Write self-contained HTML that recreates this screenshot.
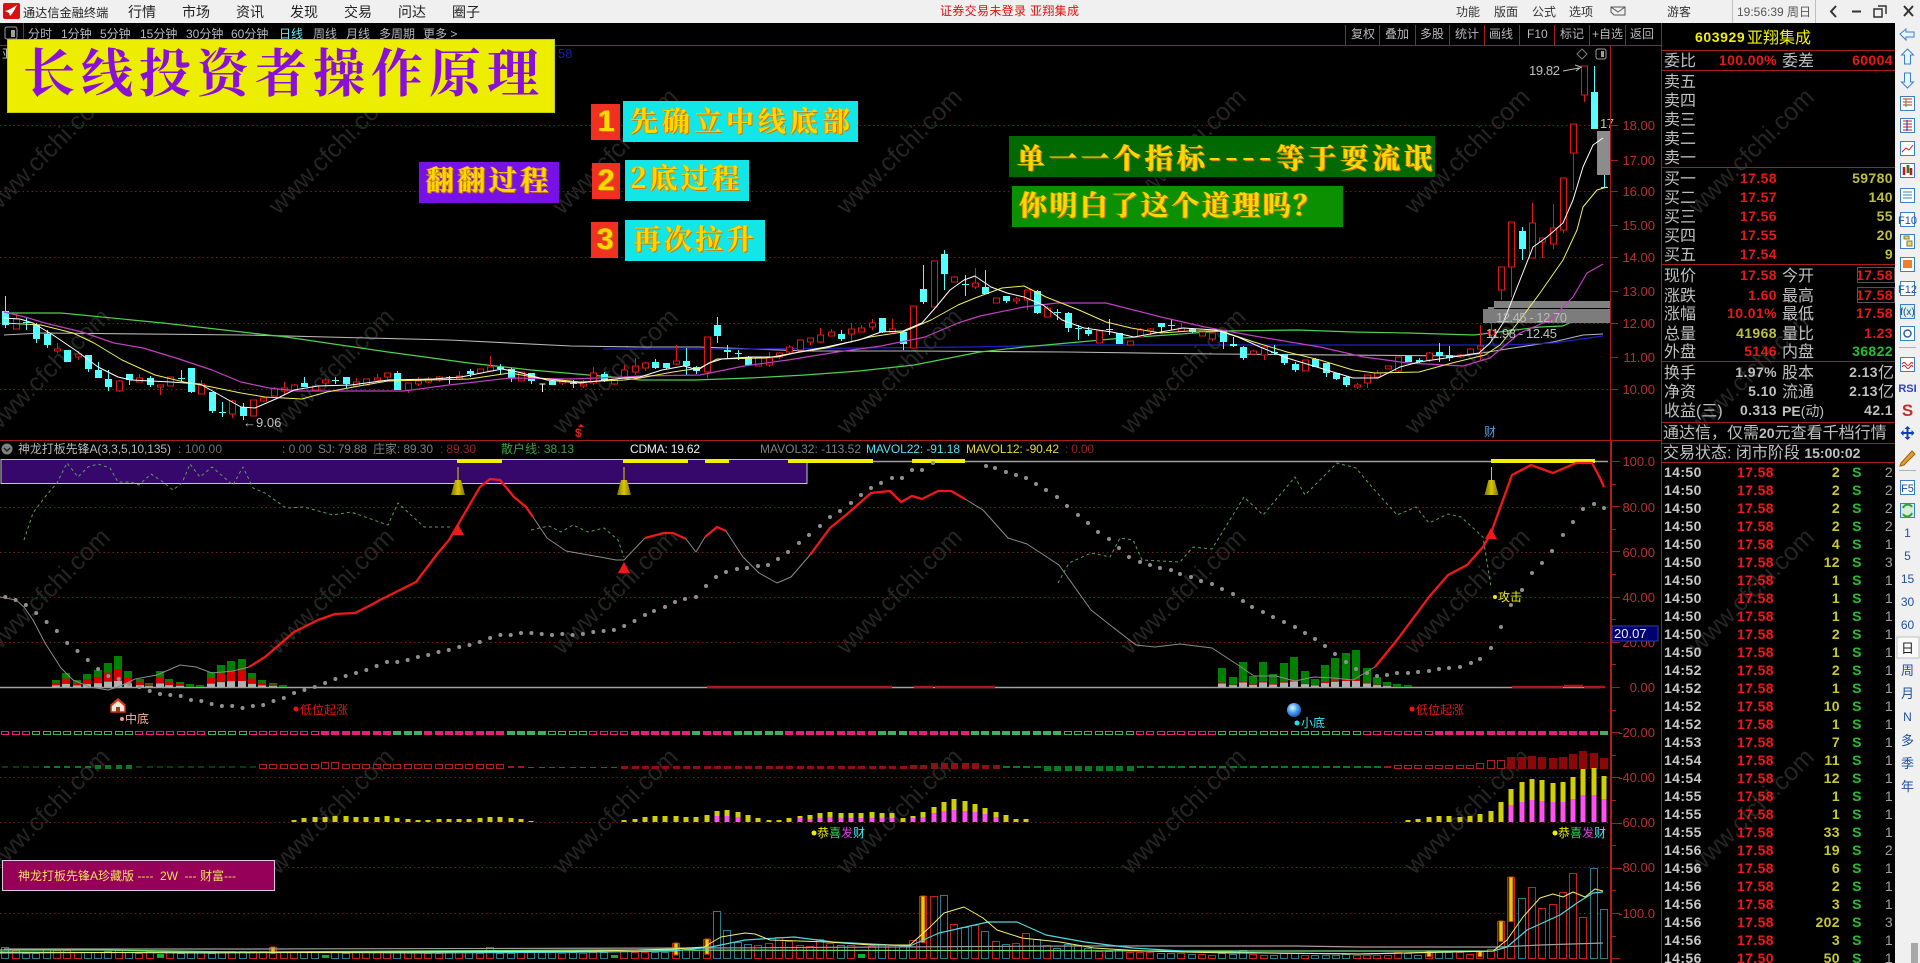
<!DOCTYPE html>
<html lang="zh">
<head>
<meta charset="utf-8">
<title>通达信金融终端</title>
<style>
html,body{margin:0;padding:0;background:#000;width:1920px;height:963px;overflow:hidden}
body{position:relative;font-family:"Liberation Sans","Noto Sans CJK SC",sans-serif}
svg{position:absolute;left:0;top:0;font-family:"Liberation Sans","Noto Sans CJK SC",sans-serif}
.b{position:absolute;box-sizing:border-box}
.g{position:absolute;white-space:pre;font-family:"Noto Serif CJK SC","Noto Sans CJK SC",serif;font-weight:700;color:#ffd800;text-shadow:1px 1px 0 #d07a00,-1px 0 0 #e0a000}
#t{position:absolute;left:1664px;top:463px;border-collapse:collapse;table-layout:fixed;width:229px;font:bold 14px "Liberation Sans",sans-serif;letter-spacing:.4px}
#t td{height:18px;padding:0;line-height:18px;text-align:right;overflow:hidden;white-space:nowrap}
#t td:nth-child(1){text-align:left;color:#c8c8c8}
#t td:nth-child(2){color:#f01818}
#t td:nth-child(3){color:#c8c830}
#t td:nth-child(4){text-align:center;color:#20c030}
#t td:nth-child(5){color:#a0a0a0;font-weight:400}
</style>
</head>
<body>
<svg id="s" width="1920" height="963" viewBox="0 0 1920 963" xmlns="http://www.w3.org/2000/svg">
<defs>
<radialGradient id="sph" cx=".4" cy=".35" r=".7"><stop offset="0" stop-color="#e8f6ff"/><stop offset=".5" stop-color="#4aa0f0"/><stop offset="1" stop-color="#1050b0"/></radialGradient>
<linearGradient id="gold" x1="0" x2="1" y1="0" y2="0"><stop offset="0" stop-color="#807000"/><stop offset=".5" stop-color="#d8c800"/><stop offset="1" stop-color="#807000"/></linearGradient>
</defs>
<!-- watermark -->
<g fill="#252525" font-size="25" text-anchor="middle">
<text transform="translate(53,157) rotate(-45)">www.cfchi.com</text><text transform="translate(337,157) rotate(-45)">www.cfchi.com</text><text transform="translate(621,157) rotate(-45)">www.cfchi.com</text><text transform="translate(905,157) rotate(-45)">www.cfchi.com</text><text transform="translate(1189,157) rotate(-45)">www.cfchi.com</text><text transform="translate(1473,157) rotate(-45)">www.cfchi.com</text><text transform="translate(1757,157) rotate(-45)">www.cfchi.com</text>
<text transform="translate(53,377) rotate(-45)">www.cfchi.com</text><text transform="translate(337,377) rotate(-45)">www.cfchi.com</text><text transform="translate(621,377) rotate(-45)">www.cfchi.com</text><text transform="translate(905,377) rotate(-45)">www.cfchi.com</text><text transform="translate(1189,377) rotate(-45)">www.cfchi.com</text><text transform="translate(1473,377) rotate(-45)">www.cfchi.com</text><text transform="translate(1757,377) rotate(-45)">www.cfchi.com</text>
<text transform="translate(53,597) rotate(-45)">www.cfchi.com</text><text transform="translate(337,597) rotate(-45)">www.cfchi.com</text><text transform="translate(621,597) rotate(-45)">www.cfchi.com</text><text transform="translate(905,597) rotate(-45)">www.cfchi.com</text><text transform="translate(1189,597) rotate(-45)">www.cfchi.com</text><text transform="translate(1473,597) rotate(-45)">www.cfchi.com</text><text transform="translate(1757,597) rotate(-45)">www.cfchi.com</text>
<text transform="translate(53,817) rotate(-45)">www.cfchi.com</text><text transform="translate(337,817) rotate(-45)">www.cfchi.com</text><text transform="translate(621,817) rotate(-45)">www.cfchi.com</text><text transform="translate(905,817) rotate(-45)">www.cfchi.com</text><text transform="translate(1189,817) rotate(-45)">www.cfchi.com</text><text transform="translate(1473,817) rotate(-45)">www.cfchi.com</text><text transform="translate(1757,817) rotate(-45)">www.cfchi.com</text>
</g>
<!-- grid -->
<path d="M0 125.5H1610M0 191.5H1610M0 257.5H1610M0 323.5H1610M0 389.5H1610M0 507.5H1610M0 552.5H1610M0 597.5H1610M0 642.5H1610M0 777.5H1610M0 822.5H1610M0 867.5H1610M0 913.5H1610" stroke="#7a1c1c" stroke-dasharray="1.5 3" fill="none"/>
<text x="2" y="58" fill="#c0c0c0" font-size="12">亚</text>
<!-- chart drawn by script goes here -->
<g id="c"></g>

<!-- upper chart annotations -->
<rect x="1494" y="301" width="116" height="7" fill="#808080"/>
<rect x="1483" y="309" width="127" height="14" fill="#7c7c7c"/>
<rect x="1597" y="131" width="13" height="44" fill="#8c8c8c"/>
<g id="c2"></g>
<g fill="#c0c0c0" font-size="13">
<text x="1496" y="322" fill="#b8b8b8" textLength="71">12.45 - 12.70</text>
<text x="1486" y="338" fill="#c0c0c0" textLength="71">11.98 - 12.45</text>
<text x="1529" y="75" textLength="31">19.82</text>
<text x="1600" y="128" textLength="14">17</text>
<text x="243" y="427">←9.06</text>
</g>
<path d="M1563 71l16-3m-4-3l6 2-5 4" stroke="#c0c0c0" fill="none"/>
<path d="M1582 49l5 5-5 5-5-5z" stroke="#808080" fill="none"/>
<rect x="1596" y="49" width="10" height="10" rx="2" fill="#000" stroke="#a0a0a0"/><rect x="1601" y="51" width="3" height="6" fill="#a0a0a0"/>
<text x="575" y="437" fill="#e02020" font-size="12" font-weight="700">$</text>
<path d="M581 424l3 3h-6z" fill="#e02020"/>
<text x="1484" y="436" fill="#4aa0e0" font-size="12">财</text>
<text x="558" y="58" fill="#1020a8" font-size="13">58</text>

<!-- panel frame -->
<path d="M0 440.5H1661M0 45.5H1661M23.5 23V45M1661.5 23V963M1610.5 45V440" stroke="#a81c1c" fill="none"/>
<path d="M1611 440V963" stroke="#b01c1c" stroke-width="2"/>
<path d="M1345.5 25V45M1379.5 25V45M1415.5 25V45M1449.5 25V45M1484.5 25V45M1519.5 25V45M1554.5 25V45M1589.5 25V45M1625.5 25V45" stroke="#a81c1c"/>
<g id="tk" stroke="#a02020"></g>
<!-- axis labels -->
<g fill="#b83030" font-size="13" text-anchor="end">
<text x="1655" y="130">18.00</text><text x="1655" y="165">17.00</text><text x="1655" y="196">16.00</text><text x="1655" y="230">15.00</text><text x="1655" y="262">14.00</text><text x="1655" y="296">13.00</text><text x="1655" y="328">12.00</text><text x="1655" y="362">11.00</text><text x="1655" y="394">10.00</text>
<text x="1655" y="466">100.0</text><text x="1655" y="512">80.00</text><text x="1655" y="557">60.00</text><text x="1655" y="602">40.00</text><text x="1655" y="647">20.00</text><text x="1655" y="692">0.00</text><text x="1655" y="737">-20.00</text><text x="1655" y="782">-40.00</text><text x="1655" y="827">-60.00</text><text x="1655" y="872">-80.00</text><text x="1655" y="918">-100.0</text>
</g>
<rect x="1612" y="626" width="46" height="15" fill="#000070" stroke="#3040a0"/>
<text x="1614" y="638" fill="#f0f0f0" font-size="13">20.07</text>

<!-- toolbar -->
<rect x="5" y="27" width="12" height="12" rx="2" fill="#000" stroke="#a0a0a0"/><rect x="11" y="30" width="4" height="7" fill="#a0a0a0"/>
<g fill="#b8b8b8" font-size="12">
<text x="28" y="38">分时</text><text x="61" y="38">1分钟</text><text x="100" y="38">5分钟</text><text x="140" y="38">15分钟</text><text x="186" y="38">30分钟</text><text x="231" y="38">60分钟</text><text x="279" y="38" fill="#70e8f0">日线</text><text x="313" y="38">周线</text><text x="346" y="38">月线</text><text x="379" y="38">多周期</text><text x="423" y="38">更多 &gt;</text>
<text x="1351" y="38">复权</text><text x="1385" y="38">叠加</text><text x="1420" y="38">多股</text><text x="1455" y="38">统计</text><text x="1489" y="38">画线</text><text x="1527" y="38">F10</text><text x="1560" y="38">标记</text><text x="1592" y="38">+自选</text><text x="1630" y="38">返回</text>
</g>

<!-- lower header -->
<circle cx="7" cy="449" r="5.5" fill="#808080"/><path d="M4 448l3 3 3-3" stroke="#222" fill="none" stroke-width="1.5"/>
<g font-size="12">
<text x="18" y="453" fill="#b8b8b8" textLength="153">神龙打板先锋A(3,3,5,10,135)</text>
<text x="178" y="453" fill="#707070" textLength="44">: 100.00</text>
<text x="282" y="453" fill="#707070" textLength="30">: 0.00</text>
<text x="318" y="453" fill="#808080" textLength="49">SJ: 79.88</text>
<text x="373" y="453" fill="#808080" textLength="60">庄家: 89.30</text>
<text x="440" y="453" fill="#a02020" textLength="36">: 89.30</text>
<text x="501" y="453" fill="#40a040" textLength="73">散户线: 38.13</text>
<text x="630" y="453" fill="#f0f0f0" textLength="70">CDMA: 19.62</text>
<text x="760" y="453" fill="#808080" textLength="101">MAVOL32: -113.52</text>
<text x="866" y="453" fill="#50e0f0" textLength="94">MAVOL22: -91.18</text>
<text x="966" y="453" fill="#e8d830" textLength="93">MAVOL12: -90.42</text>
<text x="1065" y="453" fill="#a02020" textLength="29">: 0.00</text>
</g>

<!-- signals -->
<g font-size="12">
<circle cx="122" cy="719" r="2" fill="#ff9080"/><text x="125" y="723" fill="#ffb0a0">中底</text>
<circle cx="296" cy="709" r="2.5" fill="#f01010"/><text x="300" y="714" fill="#e01818">低位起涨</text>
<circle cx="1412" cy="709" r="2.5" fill="#f01010"/><text x="1416" y="714" fill="#e01818">低位起涨</text>
<circle cx="1297" cy="723" r="2.5" fill="#20e0f0"/><text x="1301" y="727" fill="#40e8f0">小底</text>
<circle cx="1495" cy="597" r="2" fill="#f0f000"/><text x="1498" y="601" fill="#f0f000">攻击</text>
<circle cx="814" cy="833" r="2.5" fill="#f0f000"/><text x="817" y="837"><tspan fill="#f0f000">恭</tspan><tspan fill="#30e060">喜</tspan><tspan fill="#e040e0">发</tspan><tspan fill="#40e8f0">财</tspan></text>
<circle cx="1555" cy="833" r="2.5" fill="#f0f000"/><text x="1558" y="837"><tspan fill="#f0f000">恭</tspan><tspan fill="#30e060">喜</tspan><tspan fill="#e040e0">发</tspan><tspan fill="#40e8f0">财</tspan></text>
</g>
<circle cx="1294" cy="710" r="7" fill="url(#sph)"/>
<path d="M111 706l7-7 7 7v6h-14z" fill="#f0e8e0" stroke="#d03010" stroke-width="1.5"/><path d="M110 705l8-7 8 7-3 0-5-4-5 4z" fill="#d84018"/><rect x="116" y="707" width="4" height="5" fill="#904020"/>

<!-- right panel lines -->
<path d="M1662 50.5H1895M1662 70.5H1895M1662 167.5H1895M1662 264.5H1895M1662 361.5H1895M1662 422.5H1895M1662 443.5H1895M1662 462.5H1895" stroke="#a81c1c"/>
<text x="1695" y="42" fill="#f0f000" font-size="14" font-weight="700" letter-spacing=".6">603929</text><text x="1747" y="43" fill="#f0f000" font-size="16">亚翔集成</text>
<g fill="#c0c0c0" font-size="16">
<text x="1664" y="66">委比</text><text x="1782" y="66">委差</text>
<text x="1664" y="87">卖五</text><text x="1664" y="106">卖四</text><text x="1664" y="125">卖三</text><text x="1664" y="144">卖二</text><text x="1664" y="163">卖一</text>
<text x="1664" y="184">买一</text><text x="1664" y="203">买二</text><text x="1664" y="222">买三</text><text x="1664" y="241">买四</text><text x="1664" y="260">买五</text>
<text x="1664" y="281">现价</text><text x="1782" y="281">今开</text>
<text x="1664" y="301">涨跌</text><text x="1782" y="301">最高</text>
<text x="1664" y="319">涨幅</text><text x="1782" y="319">最低</text>
<text x="1664" y="339">总量</text><text x="1782" y="339">量比</text>
<text x="1664" y="357">外盘</text><text x="1782" y="357">内盘</text>
<text x="1664" y="378">换手</text><text x="1782" y="378">股本</text>
<text x="1664" y="397">净资</text><text x="1782" y="397">流通</text>
<text x="1664" y="416">收益(三)</text><text x="1782" y="416" font-size="14" font-weight="700">PE<tspan font-weight="400">(动)</tspan></text>
<text x="1663" y="438">通达信，仅需<tspan font-size="14" font-weight="700">20</tspan>元查看千档行情</text>
<text x="1663" y="458">交易状态: 闭市阶段 <tspan font-size="14" font-weight="700">15:00:02</tspan></text>
</g>
<rect x="1857.5" y="267.5" width="37" height="15" fill="none" stroke="#555"/>
<rect x="1857.5" y="287.5" width="37" height="15" fill="none" stroke="#555"/>
<g font-size="14" font-weight="700" text-anchor="end" letter-spacing=".4">
<g fill="#e81818">
<text x="1777" y="65">100.00%</text><text x="1893" y="65">60004</text>
<text x="1777" y="183">17.58</text><text x="1777" y="202">17.57</text><text x="1777" y="221">17.56</text><text x="1777" y="240">17.55</text><text x="1777" y="259">17.54</text>
<text x="1777" y="280">17.58</text><text x="1893" y="280">17.58</text>
<text x="1777" y="300">1.60</text><text x="1893" y="300">17.58</text>
<text x="1777" y="318">10.01%</text><text x="1893" y="318">17.58</text>
<text x="1893" y="338">1.23</text><text x="1777" y="356">5146</text>
</g>
<g fill="#c0c040"><text x="1893" y="183">59780</text><text x="1893" y="202">140</text><text x="1893" y="221">55</text><text x="1893" y="240">20</text><text x="1893" y="259">9</text><text x="1777" y="338">41968</text></g>
<text x="1893" y="356" fill="#20c030">36822</text>
<g fill="#c0c0c0"><text x="1777" y="377">1.97%</text><text x="1777" y="396">5.10</text><text x="1777" y="415">0.313</text><text x="1893" y="415">42.1</text><text x="1878" y="377">2.13</text><text x="1878" y="396">2.13</text></g>
</g>
<g fill="#c0c0c0" font-size="16"><text x="1878" y="378">亿</text><text x="1878" y="397">亿</text></g>

<!-- window chrome -->
<rect x="0" y="0" width="1920" height="23" fill="#f0f0f0"/>
<rect x="1895" y="23" width="25" height="940" fill="#f0f0f0"/>
<rect x="3" y="3" width="17" height="16" rx="2" fill="#d81010"/>
<path d="M5 11c4-1 7-3 12-6-2 4-4 8-7 11l-1-3z" fill="#fff"/>
<g fill="#222" font-size="14">
<text x="23" y="17" font-size="12.2">通达信金融终端</text>
<text x="128" y="17">行情</text><text x="182" y="17">市场</text><text x="236" y="17">资讯</text><text x="290" y="17">发现</text><text x="344" y="17">交易</text><text x="398" y="17">问达</text><text x="452" y="17">圈子</text>
</g>
<text x="940" y="15" fill="#e01010" font-size="12" textLength="139">证券交易未登录  亚翔集成</text>
<g fill="#333" font-size="12">
<text x="1456" y="16">功能</text><text x="1494" y="16">版面</text><text x="1532" y="16">公式</text><text x="1569" y="16">选项</text><text x="1667" y="16">游客</text>
<text x="1737" y="16" fill="#555" textLength="74">19:56:39 周日</text>
</g>
<path d="M1611 7h14v8h-11l-3-3zM1611 7l7 5 7-5" stroke="#555" fill="none"/>
<path d="M1732.5 0V23M1815.5 0V23" stroke="#c0c0c0"/>
<path d="M1836 6l-5 5.5 5 5.5" stroke="#333" stroke-width="2" fill="none"/>
<path d="M1852 11.5h9" stroke="#333" stroke-width="2"/>
<path d="M1878 6h8v8M1874 9h8v8h-8z" stroke="#333" stroke-width="1.5" fill="none"/>
<path d="M1904 6l9 10M1913 6l-9 10" stroke="#333" stroke-width="2"/>

<!-- sidebar icons -->
<g fill="#e8f4ff" stroke="#3a80c8" stroke-width="1">
<path d="M1900 34l6-5v3h8v5h-8v3z"/>
<path d="M1907.5 49l6 6h-3v9h-6v-9h-3z"/>
<path d="M1907.5 88l6-6h-3v-9h-6v9h-3z"/>
<rect x="1900.5" y="96.5" width="14" height="14" fill="#fff"/><rect x="1900.5" y="118.5" width="14" height="14" fill="#fff"/><rect x="1900.5" y="141.5" width="14" height="14" fill="#fff"/><rect x="1900.5" y="163.5" width="14" height="14" fill="#fff"/><rect x="1900.5" y="188.5" width="14" height="14" fill="#fff"/><rect x="1900.5" y="212.5" width="14" height="14" fill="#fff"/><rect x="1900.5" y="234.5" width="14" height="14" fill="#fff"/><rect x="1900.5" y="257.5" width="14" height="14" fill="#fff"/><rect x="1900.5" y="281.5" width="14" height="14" fill="#fff"/><rect x="1900.5" y="304.5" width="14" height="14" fill="#d8f0f0"/><rect x="1900.5" y="326.5" width="14" height="14" fill="#fff"/><rect x="1900.5" y="357.5" width="14" height="14" fill="#fff"/><rect x="1900.5" y="480.5" width="14" height="14" fill="#fff"/><rect x="1900.5" y="503.5" width="14" height="14" fill="#d8ecd8"/>
</g>
<path d="M1903 99h9M1903 102h9M1903 105h9" stroke="#d02020"/><path d="M1906 99v8" stroke="#20a040"/>
<path d="M1903 121h9M1903 124h9M1903 127h9M1903 130h9" stroke="#d02020"/><path d="M1907 120v11" stroke="#2030a0"/>
<path d="M1902 152l4-4 3 2 4-5" stroke="#d02020" fill="none"/>
<path d="M1904 167v8M1908 165v8M1911 168v7" stroke="#d01010" stroke-width="2.5"/><path d="M1908 165v8" stroke="#108030" stroke-width="2.5"/>
<path d="M1903 192h9M1903 195h9M1903 198h9" stroke="#4080c0"/>
<path d="M1904 236h5v3h-5zM1907 241h5v5h-5z" fill="#e8d080" stroke="#808040"/>
<rect x="1903" y="260" width="9" height="8" fill="#f08030"/>
<circle cx="1907.5" cy="333.5" r="3.5" fill="none" stroke="#3060a0" stroke-width="1.5"/>
<path d="M1902 364q2-3 4 0t4 0t3 0M1902 367q2-3 4 0t4 0t3 0" stroke="#c02020" fill="none"/>
<path d="M1899 347.5h17M1899 470.5h17" stroke="#b0b0b0"/>
<rect x="1897" y="637" width="22" height="21" fill="#fafafa" stroke="#c0c0c0"/>
<path d="M1907.5 426l3 3h-2v3h3v-2l3 3-3 3v-2h-3v3h2l-3 3-3-3h2v-3h-3v2l-3-3 3-3v2h3v-3h-2z" fill="#1040c0"/>
<path d="M1901 463l11-12 3 3-11 11-4 1z" fill="#e0a030" stroke="#a06010"/>
<path d="M1903 508a5 5 0 0 1 9-1M1912 513a5 5 0 0 1-9 1" stroke="#30a040" stroke-width="2" fill="none"/>
<g font-size="12" text-anchor="middle" fill="#2050a0">
<text x="1907.5" y="224" font-size="11">F10</text><text x="1907.5" y="293" font-size="11">F12</text><text x="1907.5" y="315" font-size="10" fill="#205060">f(x)</text><text x="1907.5" y="392" font-size="11" font-weight="700" fill="#3040c0">RSI</text><text x="1907.5" y="416" font-size="17" font-weight="700" fill="#c03030">S</text><text x="1907.5" y="492" font-size="11">F5</text>
<text x="1907.5" y="537">1</text><text x="1907.5" y="560">5</text><text x="1907.5" y="583">15</text><text x="1907.5" y="606">30</text><text x="1907.5" y="629">60</text><text x="1907.5" y="653" font-size="13" fill="#222">日</text><text x="1907.5" y="675" font-size="13">周</text><text x="1907.5" y="698" font-size="13">月</text><text x="1907.5" y="721">N</text><text x="1907.5" y="745" font-size="13">多</text><text x="1907.5" y="768" font-size="13">季</text><text x="1907.5" y="791" font-size="13">年</text>
</g>
<rect x="1911" y="943" width="7" height="20" fill="#a8a8a8"/>
</svg>

<!-- tick table -->
<table id="t"><colgroup><col style="width:60px"><col style="width:50px"><col style="width:66px"><col style="width:34px"><col style="width:19px"></colgroup>
<tr><td>14:50<td>17.58<td>2<td>S<td>2</tr>
<tr><td>14:50<td>17.58<td>2<td>S<td>2</tr>
<tr><td>14:50<td>17.58<td>2<td>S<td>2</tr>
<tr><td>14:50<td>17.58<td>2<td>S<td>2</tr>
<tr><td>14:50<td>17.58<td>4<td>S<td>1</tr>
<tr><td>14:50<td>17.58<td>12<td>S<td>3</tr>
<tr><td>14:50<td>17.58<td>1<td>S<td>1</tr>
<tr><td>14:50<td>17.58<td>1<td>S<td>1</tr>
<tr><td>14:50<td>17.58<td>1<td>S<td>1</tr>
<tr><td>14:50<td>17.58<td>2<td>S<td>1</tr>
<tr><td>14:50<td>17.58<td>1<td>S<td>1</tr>
<tr><td>14:52<td>17.58<td>2<td>S<td>1</tr>
<tr><td>14:52<td>17.58<td>1<td>S<td>1</tr>
<tr><td>14:52<td>17.58<td>10<td>S<td>1</tr>
<tr><td>14:52<td>17.58<td>1<td>S<td>1</tr>
<tr><td>14:53<td>17.58<td>7<td>S<td>1</tr>
<tr><td>14:54<td>17.58<td>11<td>S<td>1</tr>
<tr><td>14:54<td>17.58<td>12<td>S<td>1</tr>
<tr><td>14:55<td>17.58<td>1<td>S<td>1</tr>
<tr><td>14:55<td>17.58<td>1<td>S<td>1</tr>
<tr><td>14:55<td>17.58<td>33<td>S<td>1</tr>
<tr><td>14:56<td>17.58<td>19<td>S<td>2</tr>
<tr><td>14:56<td>17.58<td>6<td>S<td>1</tr>
<tr><td>14:56<td>17.58<td>2<td>S<td>1</tr>
<tr><td>14:56<td>17.58<td>3<td>S<td>1</tr>
<tr><td>14:56<td>17.58<td>202<td>S<td>3</tr>
<tr><td>14:56<td>17.58<td>3<td>S<td>1</tr>
<tr><td>14:56<td>17.50<td>50<td>S<td>1</tr>
</table>

<!-- overlays -->
<div class="b" style="left:7px;top:39px;width:548px;height:74px;background:#eded00;border:1px solid #c8c800"></div>
<div class="g" style="left:23px;top:36px;font-size:52px;line-height:68px;letter-spacing:6px;color:#8a10d8;text-shadow:none;font-weight:700">长线投资者操作原理</div>

<div class="b" style="left:591px;top:104px;width:29px;height:36px;background:#f03020"></div>
<div class="g" style="left:598px;top:104px;font:700 30px/36px 'Liberation Sans',sans-serif;">1</div>
<div class="b" style="left:623px;top:101px;width:235px;height:41px;background:#12e6e6"></div>
<div class="g" style="left:630px;top:101px;font-size:28px;line-height:38px;letter-spacing:4px">先确立中线底部</div>

<div class="b" style="left:592px;top:163px;width:28px;height:36px;background:#f03020"></div>
<div class="g" style="left:598px;top:163px;font:700 30px/36px 'Liberation Sans',sans-serif;">2</div>
<div class="b" style="left:625px;top:160px;width:124px;height:41px;background:#12e6e6"></div>
<div class="g" style="left:630px;top:158px;font-size:28px;line-height:38px;letter-spacing:3px">2底过程</div>

<div class="b" style="left:591px;top:222px;width:27px;height:36px;background:#f03020"></div>
<div class="g" style="left:597px;top:222px;font:700 30px/36px 'Liberation Sans',sans-serif;">3</div>
<div class="b" style="left:625px;top:220px;width:140px;height:41px;background:#12e6e6"></div>
<div class="g" style="left:633px;top:219px;font-size:28px;line-height:38px;letter-spacing:3px">再次拉升</div>

<div class="b" style="left:419px;top:162px;width:140px;height:41px;background:#7a10e8"></div>
<div class="g" style="left:426px;top:160px;font-size:28px;line-height:38px;letter-spacing:3.5px">翻翻过程</div>

<div class="b" style="left:1009px;top:136px;width:426px;height:41px;background:#006a00"></div>
<div class="g" style="left:1017px;top:136px;font-size:28px;line-height:38px;letter-spacing:4px">单一一个指标<span style="font-size:32px;letter-spacing:5px">----</span>等于耍流氓</div>
<div class="b" style="left:1012px;top:186px;width:331px;height:41px;background:#0a9000"></div>
<div class="g" style="left:1019px;top:185px;font-size:28px;line-height:38px;letter-spacing:2.5px">你明白了这个道理吗？</div>

<div class="b" style="left:2px;top:860px;width:273px;height:31px;background:#960058;border:1px solid #e0c8e0"></div>
<div class="b" style="left:18px;top:868px;color:#f0e060;font-size:12px;line-height:16px;white-space:pre">神龙打板先锋A珍藏版 ----  2W  --- 财富---</div>

<script>
(function(){
var P=10.315,X=function(i){return 5.3+P*i};
var C=[[1,296,311,325,328],[0,314,319,329,329],[1,318,322,323,330],[1,323,325,339,343],[1,330,334,345,348],[0,343,349,351,353],[1,350,350,362,362],[0,351,354,357,360],[1,355,355,369,372],[1,362,370,378,378],[1,370,379,387,391],[0,380,381,391,392],[1,374,374,380,385],[0,374,378,382,382],[1,376,378,385,387],[0,385,385,387,395],[0,377,377,386,386],[1,370,378,379,382],[1,368,368,392,393],[0,380,384,394,394],[1,392,392,411,413],[1,402,412,413,417],[0,400,401,414,418],[1,403,407,416,420],[0,400,400,416,416],[0,397,398,401,402],[0,387,389,396,396],[0,382,388,391,395],[0,384,385,391,391],[1,377,383,387,387],[0,384,386,390,391],[0,378,380,383,386],[1,377,380,381,384],[1,377,377,384,388],[0,378,382,386,387],[0,379,379,385,385],[0,374,378,380,381],[0,373,373,377,379],[1,371,373,390,390],[0,383,383,390,393],[0,377,381,384,386],[0,377,379,382,383],[0,376,377,380,382],[1,376,377,378,384],[0,371,376,379,380],[1,369,371,374,377],[0,369,369,373,374],[0,356,367,371,372],[1,364,367,369,375],[1,368,369,378,382],[0,372,372,381,381],[1,373,373,381,384],[2,384,384,385,392],[1,380,381,385,385],[0,379,381,383,385],[1,380,383,384,388],[0,380,384,386,388],[0,367,373,383,385],[1,372,374,381,382],[0,379,380,384,385],[0,365,370,378,379],[0,358,366,372,375],
[0,362,363,368,371],[1,359,362,368,369],[1,363,363,368,369],[0,345,361,364,365],[1,348,361,366,375],[1,366,367,371,374],[0,337,337,372,378],[1,317,325,336,343],[1,345,350,352,358],[1,350,353,354,360],[1,356,357,365,366],[0,358,358,366,366],[0,352,358,365,367],[0,352,353,357,359],[0,345,347,352,353],[0,340,340,350,350],[0,338,338,342,345],[0,328,335,342,343],[0,329,332,336,336],[1,330,334,339,341],[0,323,329,334,343],[0,325,328,332,332],[0,319,323,327,330],[1,318,318,332,333],[0,319,329,332,333],[1,331,332,344,350],[0,306,306,348,348],[1,265,289,302,304],[0,261,261,307,307],[1,250,254,274,290],[0,276,277,282,282],[1,275,284,285,296],[0,268,283,287,289],[1,270,287,294,294],[0,298,298,303,303],[1,296,296,301,303],[0,297,299,301,304],[0,290,290,300,310],[1,290,291,313,314],[0,306,308,317,317],[1,309,312,313,320],[1,312,313,328,332],[1,325,328,329,340],[1,327,330,334,336],[0,331,331,343,343],[1,319,329,330,335],[1,333,333,344,344],[0,341,341,345,345],[0,328,330,337,337],[0,328,329,331,335],[1,323,323,327,332],[1,320,325,326,330],[0,323,328,331,332],[1,328,329,332,333],[0,331,332,336,336],[0,333,333,339,341],[1,330,330,342,349],[1,337,344,346,347],[1,346,347,358,360],[0,350,351,354,354],[0,346,347,355,360],[1,345,352,353,355],[1,354,354,363,365],[1,362,364,370,372],[0,360,360,371,371],[1,358,359,367,367],[1,363,363,373,377],[1,373,373,379,380],[1,376,377,385,387],[0,383,385,387,389],[0,375,375,383,388],[0,370,373,377,378],[0,366,366,369,369],[0,357,357,371,372],[1,356,356,362,362],[1,358,360,362,364],[0,352,353,360,362],[1,343,352,356,362],[1,346,355,358,361],[0,354,355,357,358],[0,348,349,354,355],[0,325,346,349,360],[0,320,330,335,340],
[0,267,267,290,300],[0,222,222,267,297],[1,227,231,249,260],[0,203,223,258,258],[0,238,238,242,258],[0,204,228,244,249],[0,178,178,230,233],[0,124,124,153,190],[0,66,66,95,102],[1,66,92,129,129],[1,175,187,188,188]];
var rw='',rb='',cw='',cb='',ww='';
C.forEach(function(c,i){var x=+X(i).toFixed(1),r=Math.round(x)+.5;
 if(c[0]==0){rw+='M'+r+' '+c[1]+'V'+c[4];rb+='M'+(r-3)+' '+c[2]+'h6v'+Math.max(c[3]-c[2],1)+'h-6z';}
 else if(c[0]==1){cw+='M'+r+' '+c[1]+'V'+c[4];cb+='M'+r+' '+c[2]+'V'+Math.max(c[3],c[2]+1);}
 else{ww+='M'+r+' '+c[1]+'V'+c[4]+'M'+(r-3)+' '+c[2]+'h6';}
});
function pl(a,col,w,ex){var d='';for(var i=0;i<a.length;i+=2)d+=(i?' ':'')+a[i]+','+a[i+1];return '<polyline fill="none" stroke="'+col+'" stroke-width="'+w+'" stroke-linejoin="round" '+(ex||'')+' points="'+d+'"/>';}
var h='';
h+=pl([4,335,41,333,245,335,367,338,449,340,571,346,640,347,700,347,805,351,914,351,1068,352,1216,354,1463,356,1513,348,1553,342,1583,335,1603,334],'#b8b8b8',1.1);
h+=pl([603,349,640,349,750,349,969,347,1079,345,1353,345,1440,345,1507,345,1553,343,1603,336],'#2020c8',1.3);
h+=pl([4,313,61,313,163,323,286,337,388,352,469,363,531,370,612,377,640,380,695,380,750,378,805,375,859,371,914,365,980,352,1024,347,1079,342,1123,338,1167,335,1221,331,1298,330,1353,332,1408,333,1474,335,1540,327,1563,326,1580,318,1603,315],'#50d050',1.2);
h+='<path d="'+rw+'" stroke="#e01818" fill="none"/>';
h+='<path d="'+rb+'" stroke="#e01818" fill="#000"/>';
h+='<path d="'+cw+'" stroke="#54ffff" fill="none"/>';
h+='<path d="'+cb+'" stroke="#54ffff" stroke-width="7" fill="none"/>';
h+='<path d="'+ww+'" stroke="#fff" fill="none"/>';
document.getElementById('c').innerHTML=h;
h='';
h+=pl([4,312,25,317,45,323,82,332,114,343,143,348,176,358,212,370,241,382,269,388,298,391,347,391,404,391,449,385,510,378,571,379,624,377,640,376,700,375,744,366,788,360,837,352,881,346,925,337,958,323,980,316,1024,307,1057,303,1106,303,1161,317,1205,327,1260,337,1320,347,1364,357,1408,363,1463,366,1490,358,1520,333,1550,320,1573,297,1587,273,1603,264],'#c040c0',1.2);
h+=pl([4,323,41,325,73,333,94,343,122,360,155,375,184,382,212,387,241,393,265,397,302,399,327,392,359,386,388,381,429,380,469,379,510,373,539,378,580,382,624,380,640,378,673,372,700,368,717,359,766,358,794,353,826,348,870,337,903,332,931,320,958,305,975,298,1002,288,1024,286,1046,297,1079,310,1106,322,1131,328,1161,333,1189,331,1221,331,1254,342,1287,352,1320,360,1353,370,1375,373,1419,372,1452,363,1485,355,1500,345,1520,320,1540,293,1563,260,1577,230,1583,207,1597,190,1607,187],'#f0f060',1);
h+=pl([4,318,20,319,33,323,53,335,78,352,98,367,118,377,131,380,171,382,200,384,216,393,241,407,255,408,278,398,294,390,318,386,351,385,388,380,433,379,461,377,502,369,518,372,547,380,580,383,624,378,640,377,662,370,684,366,698,370,709,363,722,359,750,357,777,357,799,352,826,347,859,340,881,332,903,331,922,323,936,307,950,290,964,280,975,276,991,287,1007,293,1024,297,1043,305,1062,320,1084,328,1112,332,1134,337,1161,332,1183,328,1216,330,1238,337,1260,347,1287,358,1320,368,1353,378,1378,378,1400,367,1419,362,1446,358,1479,353,1490,343,1503,323,1520,280,1533,247,1547,237,1563,223,1573,200,1583,167,1593,145,1603,138],'#fff',1);
h+='<rect x="1" y="459.5" width="806" height="24" fill="#36086c" stroke="#c8c0d0"/>';
h+='<path d="M807 461.5H1608" stroke="#a0a0a0" stroke-width="1.5"/>';
h+='<path d="M457 461H502M623 461H688M705 461H729M788 461H873M912 461H965M1491 461H1595" stroke="#f0f000" stroke-width="4"/>';
[458,624,1491.5].forEach(function(x){h+='<path d="M'+x+' 467V482" stroke="#e0d000"/><path d="M'+(x-7)+' 495L'+(x-3)+' 480H'+(x+3)+'L'+(x+7)+' 495z" fill="url(#gold)"/>';});
h+='<path d="M0 687.5H1600" stroke="#a0a0a0" stroke-width="1.5"/>';
h+='<path d="M707 687H892M914 687H933M935 687H995M1512 687H1563M1564 686H1583M1584 687H1605" stroke="#b01818" stroke-width="2.5"/>';
var hx=[56,66,77,87,98,108,118,128,140,149,160,169,180,190,200,211,221,231,242,252,262,273,283],hy=[680,673,680,674,670,663,656,671,679,683,671,679,682,684,685,672,665,661,659,673,680,683,685];
var hx2=[1222,1233,1243,1253,1263,1273,1284,1294,1305,1315,1325,1335,1346,1356,1367,1377,1387,1397,1408],hy2=[668,677,662,676,662,674,663,657,671,679,665,658,653,650,668,677,682,684,685];
function bar(x,t,fr,fg){var H=687-t,s='';s+='<rect x="'+(x-4)+'" y="'+t+'" width="8" height="'+H+'" fill="#008000"/>';
 var gh=Math.min(H*fg,6),rh=Math.min(H*fr,12);
 if(H>3){s+='<rect x="'+(x-4)+'" y="'+(687-gh-rh)+'" width="8" height="'+rh+'" fill="#d80000"/><rect x="'+(x-4)+'" y="'+(687-gh)+'" width="8" height="'+gh+'" fill="#b0b0b0"/>';}
 return s;}
hx.forEach(function(x,i){h+=bar(x,hy[i],.38,.22)});
hx2.forEach(function(x,i){h+=bar(x,hy2[i],.05,.18)});
h+=pl([0,597,16,600,24,607,33,620,45,643,61,668,73,680,90,687,108,690,118,687,135,679,157,675,180,665,196,667,212,673,233,671,249,667],'#8c8c8c',1);
var rs=[[249,667,265,657,294,632,318,620,335,614,355,613,371,605,380,600,416,582,438,553,449,540,480,487,490,479,500,480,514,497,526,507,533,517],[645,538,664,533,673,533,686,539],[705,537,717,527,726,531],[810,555,830,528,846,515,871,493,890,491,901,502,912,496,922,499,938,491,951,491,965,499],[1375,667,1397,640,1429,597,1448,575,1467,565,1483,547,1491,533,1512,475,1531,465,1553,473,1576,463,1592,463,1600,478,1604,487]];
h+=pl([533,517,547,538,566,551,600,557,616,560,624,560,645,538],'#8c8c8c',1);
h+=pl([686,539,696,552,705,537],'#8c8c8c',1);
h+=pl([726,531,743,557,759,573,777,583,791,577,810,555],'#8c8c8c',1);
h+=pl([965,499,983,510,1008,538,1027,544,1059,565,1091,610,1110,625,1136,645,1155,647,1180,644,1212,648,1238,665,1254,676,1276,676,1295,681,1314,677,1333,678,1353,680,1375,667],'#8c8c8c',1);
rs.forEach(function(a){h+=pl(a,'#f01818',2.3)});
var gd='stroke-dasharray="3 3"';
h+=pl([24,540,33,513,45,497,57,483,67,463,78,477,88,467,98,464,110,468,118,482,131,482,139,485,151,474,163,482,173,490,182,483,190,464,200,477,212,467,233,485,243,467,253,488,265,493,286,508,304,507,333,515,351,512,388,525,398,503,424,527,453,527],'#58a058',1,gd);
h+=pl([531,530,549,526,561,532,573,525,588,532,604,528,618,540,624,557],'#58a058',1,gd);
h+=pl([1058,583,1069,563,1091,553,1110,557,1120,538,1133,540,1142,560,1180,562,1193,547,1212,549,1244,497,1263,515,1295,477,1305,495,1337,463,1356,468,1372,487,1397,515,1416,507,1429,523,1448,514,1461,517,1483,537,1491,587],'#58a058',1,gd);
var dy=[597,600,605,613,622,631,643,651,660,669,676,679,684,687,691,694,695,696,700,701,704,706,706,708,706,705,701,698,693,690,687,683,679,676,673,670,666,662,662,660,657,655,652,650,647,645,642,638,635,635,633,633,634,635,634,635,634,632,631,630,626,621];
var d='';dy.forEach(function(y,i){d+='M'+X(i).toFixed(1)+' '+y+'h0'});
var dz=[645,615,654,611,665,607,675,602,685,599,696,597,706,586,716,577,726,572,737,569,747,568,758,566,768,565,778,559,788,552,799,543,809,535,820,526,830,517,840,511,851,503,861,495,871,488,881,483,892,478,902,478,912,470,922,470,933,463,986,466,995,468,1006,472,1016,475,1026,478,1036,484,1046,490,1057,497,1067,506,1078,515,1088,523,1098,532,1109,539,1119,548,1129,557,1140,562,1150,565,1160,568,1171,570,1180,574,1191,577,1201,581,1212,584,1222,589,1233,594,1243,601,1252,607,1263,612,1273,617,1284,622,1295,627,1305,633,1315,639,1325,646,1335,654,1346,662,1356,669,1367,673,1377,676,1387,675,1397,673,1408,673,1418,672,1429,671,1439,669,1449,668,1460,667,1471,663,1480,659,1491,648,1501,627,1511,605,1522,590,1532,573,1542,563,1552,551,1563,535,1573,522,1583,509,1594,504,1604,508];
for(var i=0;i<dz.length;i+=2)d+='M'+dz[i]+' '+dz[i+1]+'h0';
h+='<path d="'+d+'" stroke="#909090" stroke-width="4" stroke-linecap="round" fill="none"/>';
[[458,530],[624,568],[1491,534]].forEach(function(p){h+='<path d="M'+(p[0]-6)+' '+(p[1]+5)+'L'+p[0]+' '+(p[1]-6)+'L'+(p[0]+6)+' '+(p[1]+5)+'z" fill="#f01818"/>'});
var R=[[30,'hP'],[133,'hG'],[205,'hP'],[247,'hG'],[318,'hP'],[390,'sP'],[421,'sG'],[505,'sP'],[545,'sG'],[586,'hG'],[628,'hP'],[691,'sP'],[701,'sG'],[733,'sP'],[784,'sG'],[878,'sP'],[908,'sG'],[970,'sP'],[1063,'sG'],[1135,'hG'],[1218,'hP'],[1361,'hG'],[1435,'hP'],[1600,'sP'],[1700,'sG']];
var sq='';
for(i=0;i<156;i++){var x=X(i),ty='';for(var j=0;j<R.length;j++){if(x<=R[j][0]){ty=R[j][1];break}}
 var col=ty[1]=='P'?'#e0207a':'#40b060';
 if(ty[0]=='h')sq+='<rect x="'+(Math.round(x)-3.5)+'" y="731.5" width="7" height="3" fill="none" stroke="'+col+'"/>';
 else sq+='<rect x="'+(Math.round(x)-4)+'" y="731" width="8" height="4" fill="'+col+'"/>';}
var base=769,rt=[12,12,13,12,11,12,15,18,16,11];
for(i=0;i<156;i++){var x=X(i),r=Math.round(x);
 if(x<258){var k=(x>40&&x<135)?(x>95?4:2):1;sq+='<rect x="'+(r-3)+'" y="'+(base-1-k/2-1)+'" width="6" height="'+k+'" fill="#0a7a20"/>';}
 else if(x<505){var k=(x>318&&x<345)?6:4;sq+='<rect x="'+(r-3.5)+'" y="'+(base-k-.5)+'" width="7" height="'+k+'" fill="none" stroke="#b02020"/>';}
 else if(x<530){sq+='<rect x="'+(r-3)+'" y="'+(base-3)+'" width="6" height="2" fill="#a01818"/>';}
 else if(x<620){sq+='<rect x="'+(r-3)+'" y="'+(base-2)+'" width="6" height="1" fill="#0a7a20"/>';}
 else if(x<998){var k=(x>925&&x<985)?6:(x>905?4:3);sq+='<rect x="'+(r-3)+'" y="'+(base-k)+'" width="7" height="'+k+'" fill="#901010"/>';}
 else if(x<1385){var k=(x>1040&&x<1135)?5:2;sq+='<rect x="'+(r-3)+'" y="'+(base-3)+'" width="7" height="'+k+'" fill="#0a7a20"/>';}
 else if(x<1395){sq+='<rect x="'+(r-4)+'" y="'+(base-3)+'" width="7" height="2" fill="#a01818"/>';}
 else if(x<1505){var k=x>1490?8:(x>1475?5:3);sq+='<rect x="'+(r-3.5)+'" y="'+(base-k-.5)+'" width="7" height="'+k+'" fill="none" stroke="#b02020"/>';}
 else{var k=rt[Math.min(i-146,9)]||12;sq+='<rect x="'+(r-4)+'" y="'+(base-k)+'" width="8" height="'+k+'" fill="#8c0808"/>';}
}
h+=sq;
var y3='';
function yb(i,y,m){var x=Math.round(X(i));y3+='<rect x="'+(x-2.5)+'" y="'+(822-y)+'" width="5" height="'+y+'" fill="#d0d000"/>';if(m)y3+='<rect x="'+(x-2.5)+'" y="'+(822-m)+'" width="5" height="'+m+'" fill="#ff50f0"/>';}
[2,4,5,5,6,6,5,5,5,6,4,3,2,2,3,3,3,3,4,5,5,4,3,1].forEach(function(v,k){yb(28+k,v,0)});
[[2],[3],[5],[6],[6],[6],[5],[5],[7],[11,6],[12,6],[10,5],[7],[4],[2],[2],[4],[6,4],[7,3],[9,4],[10,5],[9,4],[9,4],[9,4],[10,4],[9,4],[9,4],[4],[6,4],[10,5],[15,9],[20,11],[23,12],[21,11],[18,10],[14,8],[10,5],[7],[3],[3]].forEach(function(v,k){yb(60+k,v[0],v[1]||0)});
[[2],[3],[5],[6],[6],[5],[6],[8],[11],[20],[33,17],[40,20],[43,22],[42,21],[39,20],[40,20],[45,23],[53,27],[54,27],[46,23]].forEach(function(v,k){yb(136+k,v[0],v[1]||0)});
h+=y3;
var vb=958,vo='';
function vol(i,t,H,gh){var r=Math.round(X(i));
 if(t=='g'){vo+='<rect x="'+(r-3)+'" y="'+(vb-H)+'" width="7" height="'+H+'" fill="#10b030"/>';return;}
 var col=t=='r'?'#c82020':t=='o'?'#c82020':'#2a7c8c';
 vo+='<rect x="'+(r-3.5)+'" y="'+(vb-H+.5)+'" width="7" height="'+H+'" fill="#000" stroke="'+col+'"/>';
 if(t=='o'){vo+='<rect x="'+(r-2)+'" y="'+(vb-H)+'" width="4" height="'+(gh||H*.6)+'" fill="#e0d000" stroke="#c05000"/>';}
}
var sc=[1,0,1,1,1,0,0,0,1,1,1,0,1,0,0,'g',0,1,1,0,1,1,0,1,0,0,'o',0,0,1,1,'g',1,1,0,0,0,0,1,0,0,0,0,1,0,1,0,0,1,1,0,1,1,1,0,1,0,0];
var sh=[11,8,5,5,9,8,8,6,6,6,7,8,6,5,7,4,7,5,7,6,5,6,7,7,7,7,11,6,6,6,6,3,6,5,7,7,7,6,7,6,6,5,5,6,7,6,5,11,5,5,7,6,6,6,5,6,5,6];
sc.forEach(function(t,i){vol(i,t===1?'t':t===0?'r':t,sh[i])});
var V='t6,g3,r7,r6,r6,t6,t6,o15,t10,t8,o19,t47,t28,t16,t14,r13,r15,r21,r17,r13,r12,r19,r15,t13,r13,g4,r12,t14,r13,t12,r18,o62,r62,t63,r34,t31,r33,t27,r17,t14,r15,r25,t19,r13,t10,t14,t13,t10,r7,t7,t8,r6,r6,r6,t5,t5,r5,t4,r4,r3,t5,t4,t8,r4,r3,t3,t5,t5,r3,t3,t3,t3,t4,r3,r3,r3,r3,r6,t5,t3,o7,t7,t6,r6,r4,o7,r9,o37,o81,t60,r71,r50,r54,r66,r85,r41,t90,t49'.split(',');
V.forEach(function(s,k){var t=s[0],H=+s.slice(1);vol(58+k,t,H,H>30?H*(H==62?.75:.55):H*.8)});
h+=vo;
h+=pl([4,949,240,949,700,948,1080,946,1295,946,1360,947,1500,947,1540,945,1603,943],'#a0a0a0',1.2);
h+=pl([0,950,100,950,240,952,600,950,1240,951,1480,951],'#70e070',1.2);
h+=pl([0,953,200,952,420,953,600,952,673,951,711,947,745,940,794,937,833,942,910,946,939,933,988,922,1017,922,1046,935,1085,942,1133,948,1182,951,1269,953,1360,954,1493,951,1507,947,1527,930,1560,915,1577,903,1593,893,1603,892],'#50d8e0',1.2);
h+=pl([0,952,200,953,420,952,600,951,673,949,704,947,721,937,745,933,755,934,770,940,828,942,871,945,910,945,930,927,944,913,964,907,983,918,997,930,1022,938,1060,942,1094,948,1143,951,1182,952,1230,953,1269,953,1360,954,1493,951,1507,940,1523,917,1540,898,1553,894,1563,897,1573,892,1585,897,1595,889,1603,891],'#f0f070',1);
h+='<path d="M1488 308h6" stroke="#fff"/>';
document.getElementById('c2').innerHTML=h;
var t='';
[125,160,191,225,257,291,323,357,389].forEach(function(y){t+='M1611 '+(y+.5)+'h7'});
for(var y=461;y<960;y+=22.6){t+='M1612 '+(Math.round(y)+.5)+'h'+(Math.round((y-461)/22.6)%2?4:8)}
document.getElementById('tk').innerHTML='<path d="'+t+'"/>';
})();
</script>
</body>
</html>
